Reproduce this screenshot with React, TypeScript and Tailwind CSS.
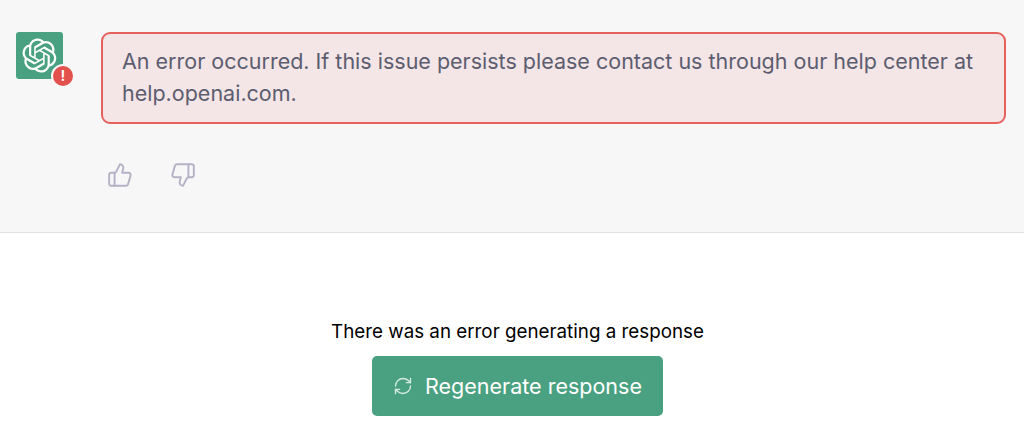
import { ThumbsUp, ThumbsDown, RefreshCw } from "lucide-react"

const logoPath = "M37.5324 16.8707C37.9808 15.5241 38.1363 14.0974 37.9886 12.6859C37.8409 11.2744 37.3934 9.91076 36.676 8.68622C35.6126 6.83404 33.9882 5.3676 32.0373 4.4985C30.0864 3.62941 27.9098 3.40259 25.8215 3.85078C24.8796 2.7893 23.7219 1.94125 22.4257 1.36341C21.1295 0.785575 19.7249 0.491269 18.3058 0.500197C16.1708 0.495044 14.0893 1.16803 12.3614 2.42214C10.6335 3.67624 9.34853 5.44666 8.6917 7.47815C7.30085 7.76286 5.98686 8.3414 4.8377 9.17505C3.68854 10.0087 2.73073 11.0782 2.02839 12.312C0.956464 14.1591 0.498905 16.2988 0.721698 18.4228C0.944492 20.5467 1.83612 22.5449 3.268 24.1293C2.81966 25.4759 2.66413 26.9026 2.81182 28.3141C2.95951 29.7256 3.40701 31.0892 4.12437 32.3138C5.18791 34.1659 6.8123 35.6322 8.76321 36.5013C10.7141 37.3704 12.8907 37.5973 14.9789 37.1492C15.9208 38.2107 17.0786 39.0587 18.3747 39.6366C19.6709 40.2144 21.0755 40.5087 22.4946 40.4998C24.6307 40.5054 26.7133 39.8321 28.4418 38.5772C30.1704 37.3223 31.4556 35.5506 32.1119 33.5179C33.5027 33.2332 34.8167 32.6547 35.9659 31.821C37.115 30.9874 38.0728 29.9178 38.7752 28.684C39.8458 26.8371 40.3023 24.6979 40.0789 22.5748C39.8556 20.4517 38.9639 18.4544 37.5324 16.8707ZM22.4978 37.8849C20.7443 37.8874 19.0459 37.2733 17.6994 36.1501C17.7601 36.117 17.8666 36.0586 17.936 36.0161L25.9004 31.4156C26.1003 31.3019 26.2663 31.137 26.3813 30.9378C26.4964 30.7386 26.5563 30.5124 26.5549 30.2825V19.0542L29.9213 20.998C29.9389 21.0068 29.9541 21.0198 29.9656 21.0359C29.977 21.052 29.9842 21.0707 29.9867 21.0902V30.3889C29.9842 32.375 29.1946 34.2791 27.7909 35.6841C26.3872 37.0892 24.4838 37.8806 22.4978 37.8849ZM6.39227 31.0064C5.51397 29.4888 5.19742 27.7107 5.49804 25.9832C5.55718 26.0187 5.66048 26.0818 5.73461 26.1244L13.699 30.7248C13.8975 30.8408 14.1233 30.902 14.3532 30.902C14.583 30.902 14.8088 30.8408 15.0073 30.7248L24.731 25.1103V28.9979C24.7321 29.0177 24.7283 29.0376 24.7199 29.0556C24.7115 29.0736 24.6988 29.0893 24.6829 29.1012L16.6317 33.7497C14.9096 34.7416 12.8643 35.0097 10.9447 34.4954C9.02506 33.9811 7.38785 32.7263 6.39227 31.0064ZM4.29707 13.6194C5.17156 12.0998 6.55279 10.9364 8.19885 10.3327C8.19885 10.4013 8.19491 10.5228 8.19491 10.6071V19.808C8.19351 20.0378 8.25334 20.2638 8.36823 20.4629C8.48312 20.6619 8.64893 20.8267 8.84863 20.9404L18.5723 26.5542L15.206 28.4979C15.1894 28.5089 15.1703 28.5155 15.1505 28.5173C15.1307 28.5191 15.1107 28.516 15.0924 28.5082L7.04046 23.8557C5.32135 22.8601 4.06716 21.2235 3.55289 19.3046C3.03862 17.3858 3.30624 15.3413 4.29707 13.6194ZM31.955 20.0556L22.2312 14.4411L25.5976 12.4981C25.6142 12.4872 25.6333 12.4805 25.6531 12.4787C25.6729 12.4769 25.6928 12.4801 25.7111 12.4879L33.7631 17.1364C34.9967 17.849 36.0017 18.8982 36.6606 20.1613C37.3194 21.4244 37.6047 22.849 37.4832 24.2684C37.3617 25.6878 36.8382 27.0432 35.9743 28.1759C35.1103 29.3086 33.9415 30.1717 32.6047 30.6641C32.6047 30.5947 32.6047 30.4733 32.6047 30.3889V21.188C32.6066 20.9586 32.5474 20.7328 32.4332 20.5338C32.319 20.3348 32.154 20.1698 31.955 20.0556ZM35.3055 15.0128C35.2464 14.9765 35.1431 14.9142 35.069 14.8717L27.1045 10.2712C26.906 10.1554 26.6803 10.0943 26.4504 10.0943C26.2206 10.0943 25.9948 10.1554 25.7963 10.2712L16.0726 15.8858V11.9982C16.0715 11.9783 16.0753 11.9585 16.0837 11.9405C16.0921 11.9225 16.1048 11.9068 16.1207 11.8949L24.1719 7.25025C25.4053 6.53903 26.8158 6.19376 28.2383 6.25482C29.6608 6.31589 31.0364 6.78077 32.2044 7.59508C33.3723 8.40939 34.2842 9.53945 34.8334 10.8531C35.3826 12.1667 35.5464 13.6095 35.3055 15.0128ZM14.2424 21.9419L10.8752 19.9981C10.8576 19.9893 10.8423 19.9763 10.8309 19.9602C10.8195 19.9441 10.8122 19.9254 10.8098 19.9058V10.6071C10.8107 9.18295 11.2173 7.78848 11.9819 6.58696C12.7466 5.38544 13.8377 4.42659 15.1275 3.82264C16.4173 3.21869 17.8524 2.99464 19.2649 3.1767C20.6775 3.35876 22.0089 3.93941 23.1034 4.85067C23.0427 4.88379 22.937 4.94215 22.8668 4.98473L14.9024 9.58517C14.7025 9.69878 14.5366 9.86356 14.4215 10.0626C14.3065 10.2616 14.2466 10.4877 14.2479 10.7175L14.2424 21.9419ZM16.071 17.9991L20.4018 15.4978L24.7325 17.9975V22.9985L20.4018 25.4983L16.071 22.9985V17.9991Z"

export default function App() {
  return (
    <div className="w-[1024px] h-[435px] overflow-hidden bg-white font-['Inter',sans-serif]">

      {/* ERROR MESSAGE */}
      <div className="h-[233px] bg-[#f7f7f8] border-b border-[#e0e0e3] pt-8 pl-4 pr-[18px] flex gap-[38px]">
        <div className="relative shrink-0 w-[47px] h-[47px] rounded-[3px] bg-[#4aa181] flex items-center justify-center">
          <svg viewBox="0 0 41 41" className="w-[35px] h-[35px]" fill="#fff">
            <path d={logoPath} />
          </svg>
          <div className="absolute left-[35px] top-[32px] w-6 h-6 rounded-full bg-[#e2514c] border-2 border-[#f7f7f8] text-white text-[15px] font-semibold flex items-center justify-center">
            !
          </div>
        </div>

        <div className="flex-1">
          <div className="h-[92px] rounded-[9px] border-2 border-[#e5615c] bg-[#f4e5e6] pl-[19px] pr-4 pt-[11px] text-[21.5px] leading-[32px] text-[#5c5d70]">
            An error occurred. If this issue persists please contact us through our help center at help.openai.com.
          </div>
          <div className="mt-[38px] ml-[6px] flex gap-[37px] text-[#b4b3c6]">
            <ThumbsUp size={26} strokeWidth={1.8} />
            <ThumbsDown size={26} strokeWidth={1.8} />
          </div>
        </div>
      </div>

      {/* REGENERATE */}
      <div className="flex flex-col items-center pt-[89px] pl-[11px]">
        <p className="text-[18.8px] leading-[20px] text-black">There was an error generating a response</p>
        <button className="mt-[14px] w-[291px] h-[60px] rounded-[5px] bg-[#4aa181] text-white flex items-center justify-center gap-[12px] text-[21.5px]">
          <RefreshCw size={20} strokeWidth={1.6} className="text-[#d6ebe3]" />
          Regenerate response
        </button>
      </div>

    </div>
  )
}
